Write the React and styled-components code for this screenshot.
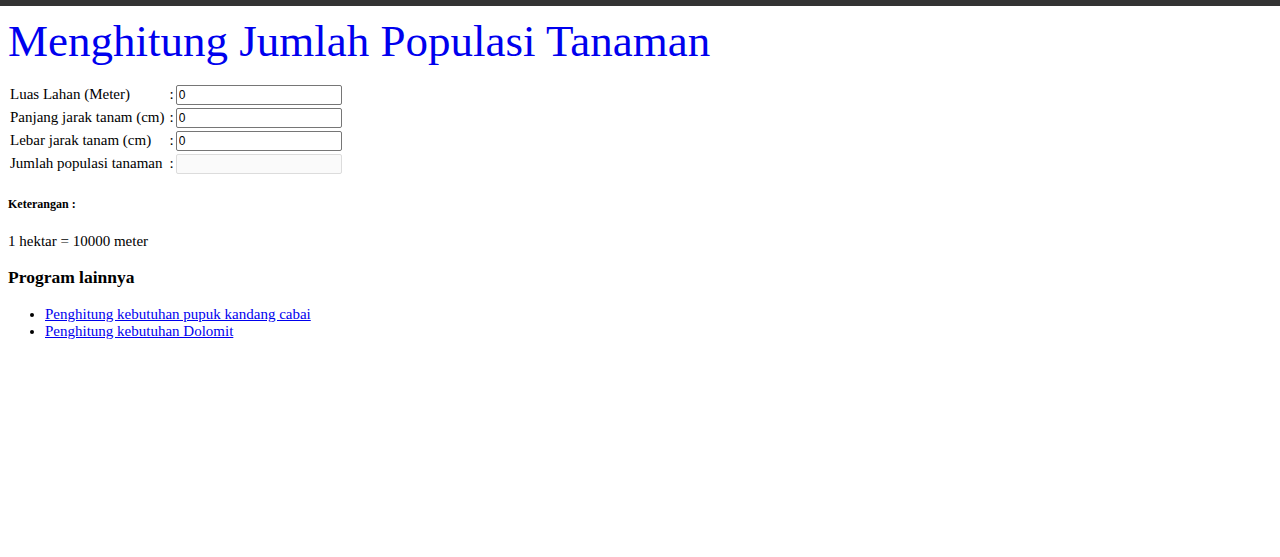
import React from 'react'
import styled, { createGlobalStyle } from 'styled-components'

const GlobalStyle = createGlobalStyle`
    body {
        margin: 0;
        font-family: "Liberation Serif", "Times New Roman", serif;
        color: #000;
        background: #fff;
    }
`

const fields = [
    { label: 'Luas Lahan (Meter)', value: '0' },
    { label: 'Panjang jarak tanam (cm)', value: '0' },
    { label: 'Lebar jarak tanam (cm)', value: '0' },
    { label: 'Jumlah populasi tanaman', value: '', disabled: true },
]

const links = [
    'Penghitung kebutuhan pupuk kandang cabai',
    'Penghitung kebutuhan Dolomit',
]

const App = () => {
    return (
        <>
            <GlobalStyle />
            <TopBar />
            <Page>
                <Title>Menghitung Jumlah Populasi Tanaman</Title>
                <Form>
                    <tbody>
                        {fields.map((f) => (
                            <tr key={f.label}>
                                <Cell>{f.label}</Cell>
                                <Colon>:</Colon>
                                <Cell>
                                    <Field
                                        type="text"
                                        defaultValue={f.value}
                                        disabled={f.disabled}
                                    />
                                </Cell>
                            </tr>
                        ))}
                    </tbody>
                </Form>
                <Note>Keterangan :</Note>
                <Text>1 hektar = 10000 meter</Text>
                <SubTitle>Program lainnya</SubTitle>
                <LinkList>
                    {links.map((l) => (
                        <li key={l}>
                            <Link href="#">{l}</Link>
                        </li>
                    ))}
                </LinkList>
            </Page>
        </>
    )
}

export default App

const TopBar = styled.div`
    height: 6px;
    background: #333;
`
const Page = styled.div`
    padding: 0 8px 8px;
    font-size: 15px;
`
const Title = styled.h1`
    color: #0000ee;
    font-weight: normal;
    font-size: 45px;
    margin: 10px 0 15px;
    line-height: 1.15;
`
const Form = styled.table`
    border-spacing: 1px 1.8px;
`
const Cell = styled.td`
    padding: 1px;
    font-size: 15px;
    white-space: nowrap;
`
const Colon = styled(Cell)`
    padding: 1px 0 1px 3px;
`
const Field = styled.input`
    width: 166px;
    height: 20px;
    box-sizing: border-box;
    padding: 1px 2px;
    font-family: "Liberation Sans", Arial, sans-serif;
    font-size: 12px;
    border: 1px solid #767676;
    border-radius: 2px;
    background: #fff;
    &:disabled {
        background: #fafafa;
        border-color: #dcdcdc;
    }
`
const Note = styled.h5`
    font-size: 12px;
    font-weight: bold;
    margin: 21px 0 21px;
`
const Text = styled.p`
    margin: 0 0 17px;
`
const SubTitle = styled.h3`
    font-size: 17.5px;
    font-weight: bold;
    margin: 0 0 18px;
`
const LinkList = styled.ul`
    margin: 0;
    padding-left: 37px;
`
const Link = styled.a`
    color: #0000ee;
`
